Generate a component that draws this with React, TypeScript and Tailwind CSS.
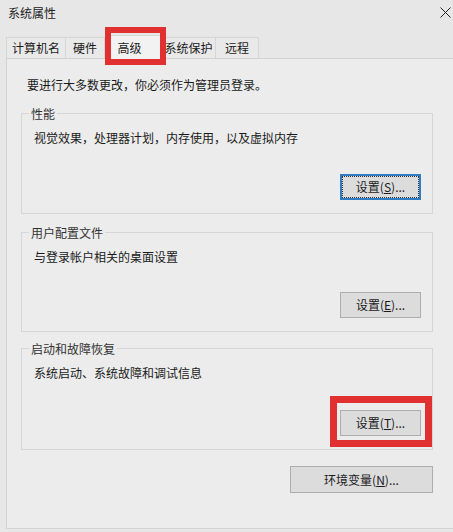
import React from 'react'

const font = { fontFamily: '"Noto Sans CJK SC", "Noto Sans", sans-serif' }

function Btn({ label, hotkey, focused = false }: { label: string; hotkey: string; focused?: boolean }) {
  if (focused) {
    return (
      <button className="flex h-[26px] w-[81px] border-2 border-[#2f7bc4] bg-[#dcdcdc] p-0 text-[12px] leading-none text-[#1a1a1a]">
        <span className="flex flex-1 items-center justify-center self-stretch border border-dotted border-[#333]">
          {label}(<span className="underline">{hotkey}</span>)...
        </span>
      </button>
    )
  }
  return (
    <button className="flex h-[26px] w-[81px] items-center justify-center border border-[#adadad] bg-[#dcdcdc] text-[12px] leading-none text-[#1a1a1a]">
      {label}(<span className="underline">{hotkey}</span>)...
    </button>
  )
}

function Group({
  title,
  desc,
  height,
  children,
}: {
  title: string
  desc: string
  height: string
  children: React.ReactNode
}) {
  return (
    <div className={`flex w-[412px] flex-col border border-[#d6d6d6] ${height}`}>
      <span className="-mt-[8px] ml-[7px] self-start bg-[#ececec] px-[2px] text-[12px] leading-[16px] text-[#333]">
        {title}
      </span>
      <p className="mt-[8px] pl-[12px] text-[12px] leading-[16px] text-[#1a1a1a]">{desc}</p>
      <div className="mt-auto mb-[13px] flex justify-end pr-[11px]">{children}</div>
    </div>
  )
}

export default function App() {
  const tabs = [
    { name: '计算机名', w: 'w-[60px]' },
    { name: '硬件', w: 'w-[40px]' },
    { name: '高级', w: 'w-[57px]', active: true },
    { name: '系统保护', w: 'w-[55px]' },
    { name: '远程', w: 'w-[44px]' },
  ]

  return (
    <div className="relative flex h-[532px] w-[453px] flex-col overflow-hidden bg-[#e7e7e7]" style={font}>
      {/* title bar */}
      <div className="flex h-[24px] items-center justify-between pl-[8px] pr-[2px] pt-[1px]">
        <span className="text-[12px] leading-none text-[#222]">系统属性</span>
        <svg width="11" height="11" viewBox="0 0 11 11" className="mr-[0px]">
          <path d="M0.5 0.5 L10.5 10.5 M10.5 0.5 L0.5 10.5" stroke="#222" strokeWidth="1" fill="none" />
        </svg>
      </div>

      {/* tabs */}
      <div className="mt-[13px] flex h-[21px] items-end pl-[6px]">
        {tabs.map((t) =>
          t.active ? (
            <div
              key={t.name}
              className={`relative -mb-px flex h-[24px] items-center justify-center border border-b-0 border-[#d6d6d6] bg-[#f2f2f2] pr-[8px] text-[12px] text-[#1a1a1a] ${t.w}`}
            >
              {t.name}
            </div>
          ) : (
            <div
              key={t.name}
              className={`-ml-px flex h-[21px] items-center justify-center border border-b-0 border-[#d6d6d6] bg-[#e9e9e9] text-[12px] text-[#1a1a1a] first:ml-0 ${t.w}`}
            >
              {t.name}
            </div>
          )
        )}
      </div>

      {/* tab panel */}
      <div className="ml-[6px] flex h-[471px] flex-col border border-r-0 border-[#d2d2d2] bg-[#ececec] pl-[14px] pt-[18px]">
        <p className="pl-[6px] text-[12px] leading-[16px] text-[#1a1a1a]">要进行大多数更改，你必须作为管理员登录。</p>

        <div className="mt-[20px] flex flex-col">
          <Group title="性能" desc="视觉效果，处理器计划，内存使用，以及虚拟内存" height="h-[101px]">
            <Btn label="设置" hotkey="S" focused />
          </Group>
        </div>
        <div className="mt-[18px]">
          <Group title="用户配置文件" desc="与登录帐户相关的桌面设置" height="h-[100px]">
            <Btn label="设置" hotkey="E" />
          </Group>
        </div>
        <div className="mt-[16px]">
          <Group title="启动和故障恢复" desc="系统启动、系统故障和调试信息" height="h-[102px]">
            <Btn label="设置" hotkey="T" />
          </Group>
        </div>

        <div className="mt-[16px] flex w-[412px] justify-end">
          <button className="flex h-[27px] w-[143px] items-center justify-center border border-[#adadad] bg-[#dcdcdc] text-[12px] leading-none text-[#1a1a1a]">
            环境变量(<span className="underline">N</span>)...
          </button>
        </div>
      </div>

      {/* annotation boxes */}
      <div className="pointer-events-none absolute left-[105px] top-[27px] h-[38px] w-[61px] border-[6px] border-[#e0302f]" />
      <div className="pointer-events-none absolute left-[330px] top-[396px] h-[51px] w-[102px] border-[7px] border-[#e0302f]" />
    </div>
  )
}
